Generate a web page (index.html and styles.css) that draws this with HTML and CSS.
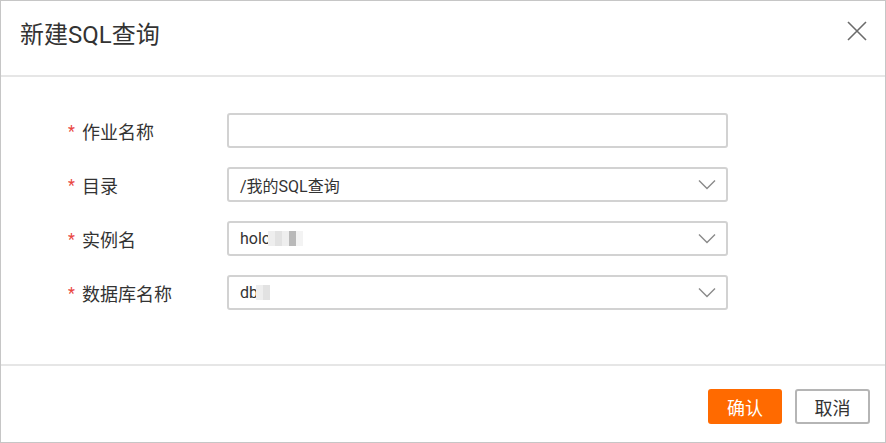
FILE: index.html
```html
<!DOCTYPE html>
<html lang="zh-CN">
<head>
<meta charset="utf-8">
<title>新建SQL查询</title>
<link rel="stylesheet" href="styles.css">
</head>
<body>
<div class="dialog">
  <div class="dialog-header">
    <h1 class="dialog-title">新建SQL查询</h1>
    <button class="close-btn" aria-label="关闭">
      <svg width="20" height="20" viewBox="0 0 20 20"><path d="M1 1 L19 19 M19 1 L1 19" stroke="#6b6b6b" stroke-width="1.6" fill="none"/></svg>
    </button>
  </div>
  <div class="dialog-body">
    <div class="form-row">
      <label class="form-label"><span class="req">*</span>作业名称</label>
      <div class="field"></div>
    </div>
    <div class="form-row">
      <label class="form-label"><span class="req">*</span>目录</label>
      <div class="field select"><span class="value">/我的SQL查询</span>
        <svg class="chev" width="18" height="11" viewBox="0 0 18 11"><path d="M1 1.5 L9 9.5 L17 1.5" stroke="#8a8a8a" stroke-width="1.4" fill="none"/></svg>
      </div>
    </div>
    <div class="form-row">
      <label class="form-label"><span class="req">*</span>实例名</label>
      <div class="field select"><span class="value">holo<span class="mosaic m-holo"><i class="b1"></i><i class="b2"></i><i class="b1"></i><i class="b3"></i><i class="b4"></i></span></span>
        <svg class="chev" width="18" height="11" viewBox="0 0 18 11"><path d="M1 1.5 L9 9.5 L17 1.5" stroke="#8a8a8a" stroke-width="1.4" fill="none"/></svg>
      </div>
    </div>
    <div class="form-row">
      <label class="form-label"><span class="req">*</span>数据库名称</label>
      <div class="field select"><span class="value">db<span class="mosaic m-db"><i class="b1"></i><i class="b2"></i></span></span>
        <svg class="chev" width="18" height="11" viewBox="0 0 18 11"><path d="M1 1.5 L9 9.5 L17 1.5" stroke="#8a8a8a" stroke-width="1.4" fill="none"/></svg>
      </div>
    </div>
  </div>
  <div class="dialog-footer">
    <button class="btn btn-primary">确认</button>
    <button class="btn btn-default">取消</button>
  </div>
</div>
</body>
</html>
```
FILE: styles.css
```css
* { box-sizing: border-box; }
html, body { margin: 0; padding: 0; background: #fff; }
body {
  font-family: Roboto, "Noto Sans CJK SC", sans-serif;
  color: #333;
}
.dialog {
  width: 886px;
  height: 443px;
  border: 1px solid #c6c6c6;
  display: flex;
  flex-direction: column;
}
.dialog-header {
  height: 76px;
  border-bottom: 2px solid #e6e6e6;
  display: flex;
  align-items: flex-start;
  justify-content: space-between;
  padding: 17px 18px 0 19px;
}
.dialog-title {
  margin: 0;
  font-size: 24px;
  line-height: 34px;
  font-weight: normal;
  color: #333;
}
.close-btn {
  border: 0;
  background: none;
  padding: 0;
  width: 20px;
  height: 20px;
  display: flex;
  margin-top: 3px;
}
.dialog-body {
  height: 289px;
  padding: 36px 0 0 67px;
  display: flex;
  flex-direction: column;
  gap: 19px;
  border-bottom: 2px solid #e6e6e6;
}
.form-row {
  display: flex;
  align-items: center;
  height: 35px;
}
.form-label {
  width: 159px;
  font-size: 18px;
  color: #333;
  display: flex;
  align-items: center;
}
.req {
  color: #e9463f;
  font-size: 16px;
  width: 14px;
  margin-top: 2px;
}
.field {
  width: 501px;
  height: 35px;
  border: 2px solid #d2d2d2;
  border-radius: 3px;
  display: flex;
  align-items: center;
  justify-content: space-between;
  padding: 0 10px 0 11px;
}
.value {
  font-size: 16px;
  color: #333;
  display: flex;
  align-items: center;
}
.mosaic {
  display: inline-flex;
  height: 15px;
}
.mosaic i { display: block; width: 7px; height: 15px; }
.m-holo { margin-left: -3px; }
.m-db { margin-left: -2px; }
.b1 { background: #eeeeee; }
.b2 { background: #e2e2e2; }
.b3 { background: #b9b9b9; }
.b4 { background: #f3f3f3; }
.chev { display: block; }
.dialog-footer {
  flex: 1;
  display: flex;
  justify-content: flex-end;
  align-items: flex-start;
  gap: 13px;
  padding: 23px 15px 0 0;
}
.btn {
  width: 75px;
  height: 35px;
  font-family: Roboto, "Noto Sans CJK SC", sans-serif;
  font-size: 18px;
  border-radius: 3px;
  padding: 0;
  display: flex;
  align-items: center;
  justify-content: center;
}
.btn-primary {
  background: #ff6a00;
  color: #fff;
  border: 0;
  width: 74px;
}
.btn-default {
  background: #fff;
  color: #333;
  border: 2px solid #b5b5b5;
}
```
